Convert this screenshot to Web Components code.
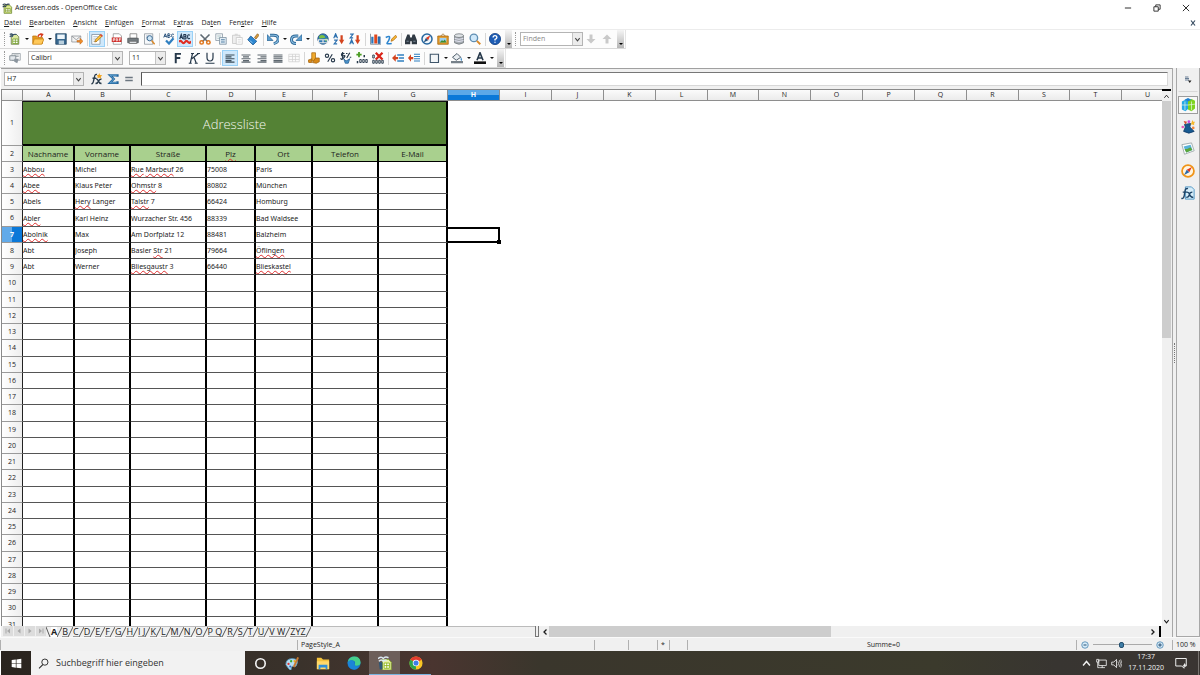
<!DOCTYPE html>
<html lang="de">
<head>
<meta charset="utf-8">
<title>Adressen.ods - OpenOffice Calc</title>
<style>
  html, body { margin: 0; height: 100%; }
  body { background: #fff; color: #1c1c1c; font: 7px/10px "Open Sans", "Noto Sans", sans-serif; overflow: hidden; }
</style>
</head>
<body>
<calc-app></calc-app>
<script>
const ICONS = {
  ods: '<path d="M3 3h8l3 3v9H3z" fill="#dbe88a" stroke="#5b7a1e"/><path d="M5 8h7v5H5zM5 10.500h7M8.500 8v5" fill="#fff" stroke="#7d9a2a"/><path d="M1 3q3-3 5 0q2-2 5-1M1 6q3-3 5 0" fill="none" stroke="#345" stroke-width="1.600"/>',
  newdoc: '<path d="M3 2h7l3 3v10H3z" fill="#dbe8a0" stroke="#5f7440"/><path d="M5 8h7v6H5zM5 11h7M8.500 8v6" fill="#fff" stroke="#6f9d23"/><path d="M1 2q3-2 4 1q2-2 5-1M1 5q2-2 4 0" fill="none" stroke="#35506d" stroke-width="1.600"/>',
  open: '<path d="M1 4h5l2 2h6v8H1z" fill="#e79a1c" stroke="#b87410"/><path d="M3 8h13l-3 7H1z" fill="#ffc95a" stroke="#c98312"/><path d="M8 5q1-4 5-3M11 1l3 1-2 3" fill="none" stroke="#d63a1c" stroke-width="2"/>',
  save: '<path d="M1 1h14v14H1z" fill="#38688f" stroke="#1e415f"/><path d="M3 2h10v6H3z" fill="#eef6fb"/><path d="M5 10h7v5H5z" fill="#b9cfdd"/>',
  mail: '<path d="M1 4h12v8H1z" fill="#f3f3f3" stroke="#8a8f94"/><path d="M1 4l6 5 6-5" fill="none" stroke="#8a8f94"/><path d="M8 10h4V7l4 4-4 4v-3H8z" fill="#f0902c" stroke="#bb5e10" stroke-width=".7"/>',
  edit: '<path d="M1 2h11v13H1z" fill="#fff" stroke="#7b8b99"/><path d="M3 5h7M3 8h7M3 11h5" stroke="#8da4b8"/><path d="M5 12l1-3 7-7 2 2-7 7z" fill="#ffc83d" stroke="#a46a12"/><path d="M12 3l1-2 3 3-2 1z" fill="#d9463a"/>',
  pdf: '<path d="M3 1h8l3 3v11H3z" fill="#fff" stroke="#8b8b8b"/><path d="M1 6h13v6H1z" fill="#cf2a27"/><path d="M3 11V7.500h2v2H3M7 7.500v3h1.500v-3zM11 11V7.500h2M11 9h2" stroke="#fff" fill="none"/>',
  print: '<path d="M4 1h9v6H4z" fill="#fff" stroke="#777"/><path d="M1 7h14v6H1z" fill="#737b80" stroke="#4b5054"/><path d="M3 11h10v3H3z" fill="#dde1e4" stroke="#666"/>',
  preview: '<path d="M2 1h11v14H2z" fill="#f7f9fb" stroke="#8a939b"/><path d="M4 4h4M4 6h3M4 8h2" stroke="#9ab"/><circle cx="9" cy="7" r="3.500" fill="#cfe6f6" stroke="#3c6a92" stroke-width="1.300"/><path d="M11.500 10l4 5" stroke="#d98a2b" stroke-width="2"/>',
  spell: '<path d="M1 6l2-5 2 5M1.700 4.500h2.600M6.500 1v5h2q2-1.300 0-2.500h-2 2q1.500-1.300 0-2.500zM14.500 2q-3-2-3 1.500t3 1.500" fill="none" stroke="#27507a" stroke-width="1.300"/><path d="M4 10l4 4 6-7" fill="none" stroke="#2f7fc0" stroke-width="3"/>',
  autospell: '<path d="M1 8l2-6 2 6M1.700 6h2.600M6.500 2v6h2q2-1.500 0-3h-2 2q1.500-1.500 0-3zM14.500 3q-3-2-3 2t3 2" fill="none" stroke="#1f3550" stroke-width="1.500"/><path d="M0 12q2-3 4 0t4 0 4 0 4-1" fill="none" stroke="#e02b20" stroke-width="3"/>',
  cut: '<path d="M2 2l9 9M14 2l-9 9" stroke="#5f6a73" stroke-width="2.200"/><circle cx="3.500" cy="12.500" r="2.300" fill="none" stroke="#e0751a" stroke-width="2"/><circle cx="12.500" cy="12.500" r="2.300" fill="none" stroke="#e0751a" stroke-width="2"/>',
  copy: '<path d="M1 1h9v9H1z" fill="#f4f6f8" stroke="#8796a3"/><path d="M3 4h5M3 7h5" stroke="#9bb"/><path d="M6 6h9v9H6z" fill="#e1ecf4" stroke="#7a8d9d"/><path d="M8 9h5M8 12h5" stroke="#5580a5" stroke-width="1.400"/>',
  paste: '<g opacity=".55"><path d="M2 3h10v11H2z" fill="#e3e3e3" stroke="#999"/><path d="M5 1h4v3H5z" fill="#bbb"/><path d="M7 6h8v9H7z" fill="#fff" stroke="#999"/><path d="M9 9h4M9 12h4" stroke="#aaa"/></g>',
  brush: '<path d="M10 6l4-5 2 2-4 5z" fill="#d89b3e" stroke="#8f621d"/><path d="M5 4l8 7-5 5-7-7z" fill="#2c86cf" stroke="#1a5792"/><path d="M4 10l3 3" stroke="#bfe0f8"/>',
  undo: '<path d="M4 3h5q6 0 6 5t-6 6" fill="none" stroke="#2c6796" stroke-width="4"/><path d="M4 3h5q6 0 6 5t-6 6" fill="none" stroke="#8fc1e4" stroke-width="1.500"/><path d="M0 2v8h8z" fill="#5c9dce" stroke="#2c6796"/>',
  redo: '<path d="M11 4H8Q2 4 2 9t6 5" fill="none" stroke="#2c6796" stroke-width="4"/><path d="M11 4H8Q2 4 2 9t6 5" fill="none" stroke="#8fc1e4" stroke-width="1.500"/><path d="M16 2v8H8z" fill="#5c9dce" stroke="#2c6796"/>',
  globe: '<circle cx="8" cy="8" r="7" fill="#2d78b5" stroke="#1d4f7b"/><path d="M3 4q4-3 7 0t-3 3-4 1zM10 8l4-1-2 5z" fill="#7bc043"/><path d="M2 9h6v4H2zM8 9h6v4H8z" fill="none" stroke="#e8e8e8" stroke-width="1.600"/>',
  az: '<path d="M1 7l2.500-6L6 7M2 5h3M1.500 9.500h4l-4 5h4" fill="none" stroke="#2a6fae" stroke-width="1.500"/><path d="M11.500 3v8" stroke="#d3441f" stroke-width="3"/><path d="M8 9h7l-3.500 6z" fill="#d3441f"/>',
  za: '<path d="M1.500 1.500h4l-4 5h4M1 15l2.500-6L6 15M2 13h3" fill="none" stroke="#2a6fae" stroke-width="1.500"/><path d="M11.500 3v8" stroke="#d3441f" stroke-width="3"/><path d="M8 9h7l-3.500 6z" fill="#d3441f"/>',
  chart: '<path d="M2 1v14h14" fill="none" stroke="#6c7a86"/><path d="M3 5h3v9H3z" fill="#2e76ba"/><path d="M7 2h4v12H7z" fill="#e0471c"/><path d="M12 5h3v9h-3z" fill="#2e76ba" stroke="#174f86" stroke-width=".6"/>',
  draw: '<path d="M1 6q6-3 5 1t-3 6 6 1" fill="none" stroke="#2e86cf" stroke-width="2"/><path d="M8 11l1-3 5-5 2 2-5 5z" fill="#f7b733" stroke="#b26b12"/>',
  binoc: '<path d="M3 2h3l1 4h2l1-4h3l3 8v5H9v-4H7v4H0v-5z" fill="#303a44"/><path d="M2 11h3M11 11h3" stroke="#8ea0b0"/>',
  compass: '<circle cx="8" cy="8" r="6.700" fill="#eef5fb" stroke="#27679f" stroke-width="2"/><path d="M12.500 3L9.500 9.500 6.500 6.500z" fill="#e03a20"/><path d="M3.500 12.500l3-6 3 3z" fill="#26527e"/>',
  gallery: '<path d="M5 4l3-3 3 3" fill="none" stroke="#9a6a22"/><path d="M1 4h14v11H1z" fill="#e59a28" stroke="#a3640d"/><path d="M3.500 6.500h9v6h-9z" fill="#9ed0f2"/><path d="M3.500 12.500l3-3 2 1 2-2 2 4z" fill="#3d8d2f"/>',
  database: '<path d="M2 3.500v9.500q6 4 12 0V3.500z" fill="#a7adb2" stroke="#6c7378"/><ellipse cx="8" cy="3.500" rx="6" ry="2.500" fill="#dfe3e6" stroke="#6c7378"/><path d="M2 7q6 3 12 0M2 10q6 3 12 0" fill="none" stroke="#eef"/>',
  zoom: '<circle cx="6.500" cy="6.500" r="5" fill="#cfe8fa" stroke="#5f8eb3" stroke-width="1.800"/><path d="M10.500 10.500l4.500 4.500" stroke="#d98a2b" stroke-width="2.600"/>',
  help: '<circle cx="8" cy="8" r="7.500" fill="#1d5cb4" stroke="#0f3b7e"/><path d="M5.500 6q0-2.500 2.500-2.500T10.500 6q0 1.500-2.500 2.500v1.500M8 11.500v1.500" fill="none" stroke="#fff" stroke-width="1.800"/>',
  down: '<path d="M6 2h4v6h4l-6 6-6-6h4z" fill="#c9c9c9"/>',
  up: '<path d="M6 14h4V8h4L8 2 2 8h4z" fill="#c9c9c9"/>',
  styles: '<path d="M4 2h11v9H4z" fill="#f6f7f8" stroke="#8c959c"/><path d="M6 4h7M6 6h7" stroke="#8c959c"/><path d="M1 5h8v6H1z" fill="#e3e8ec" stroke="#6f7a83"/><path d="M7 9h6l-2 6-4-2z" fill="#8b959e"/>',
  bold: '<path d="M5 15V2.500h7M5 8h6" fill="none" stroke="#26384a" stroke-width="2.600"/>',
  italic: '<path d="M6 2L3 15M14 2L5 9M8 7l3 8M4 2h4M12 2h4M1 15h4M9 15h4" fill="none" stroke="#26384a" stroke-width="1.600"/>',
  underline: '<path d="M4 1v6q0 5 4 5t4-5V1M2 15h12" fill="none" stroke="#26384a" stroke-width="1.600"/>',
  left: '<path d="M2 4h12M2 6.500h8M2 9h12M2 11.500h8M2 13.500h12" stroke="#3c4c59" stroke-width="1.500"/>',
  center: '<path d="M2 4h12M4 6.500h8M2 9h12M4 11.500h8M2 13.500h12" stroke="#5c666e" stroke-width="1.500"/>',
  right: '<path d="M2 4h12M6 6.500h8M2 9h12M6 11.500h8M2 13.500h12" stroke="#5c666e" stroke-width="1.500"/>',
  justify: '<path d="M2 4h12M2 6.500h12M2 9h12M2 11.500h12M2 13.500h12" stroke="#5c666e" stroke-width="1.500"/>',
  merge: '<path d="M1 3h14v10H1zM1 6h14M1 10h14M6 3v10M10 3v10" fill="#fafafa" stroke="#d2d2d2"/>',
  currency: '<path d="M5 1h5v11H5z" fill="#f0a92c" stroke="#a86a10"/><path d="M0 11l5-2v5H1zM10 8h5v5l-4 2-5-1z" fill="#d98a1a" stroke="#a3640d"/>',
  percent: '<circle cx="4" cy="5" r="2.200" fill="none" stroke="#26384a" stroke-width="1.500"/><circle cx="12" cy="11" r="2.200" fill="none" stroke="#26384a" stroke-width="1.500"/><path d="M11 3L5 13" stroke="#26384a" stroke-width="1.500"/>',
  stdnum: '<path d="M6 2q-4-1-4 1.500t3 1.500 0 3-4 0M3.500 0v9M13 1L9 8M8 2h2M13 7h2" fill="none" stroke="#26384a" stroke-width="1.600"/><path d="M5 9l3 3 5-3-2 6H7z" fill="#4c94cc" stroke="#225f93"/>',
  adddec: '<path d="M4 0v7M.5 3.500h7" stroke="#4a9c22" stroke-width="2.400"/><path d="M11 4v3M2 12v3" stroke="#26384a" stroke-width="2"/><path d="M5 10h2v4H5zM9 10h2v4H9zM13 10h2v4h-2z" fill="none" stroke="#26384a" stroke-width="1.200"/>',
  deldec: '<path d="M1 4h2v4H1zM1 11h2v4H1zM5 11h2v4H5zM9 11h2v4H9zM13 11h2v4h-2z" fill="none" stroke="#26384a" stroke-width="1.200"/><path d="M5 1l9 9M14 1l-9 9" stroke="#d92318" stroke-width="3"/>',
  outdent: '<path d="M7 4h9M9 8h7M7 12h9" stroke="#2f7fc0" stroke-width="1.700"/><path d="M8 6.500H5V3L0 8l5 5V9.500h3z" fill="#d3441f"/>',
  indent: '<path d="M8 3h8M8 6h8M8 9h8M8 12h8" stroke="#2f7fc0" stroke-width="1.500"/><path d="M7 6.500H4V3L0 8l4 5V9.500h3z" fill="#d3441f"/>',
  border: '<path d="M3 3h11v11H3z" fill="#f3f6f8" stroke="#3f556a" stroke-width="1.500"/>',
  fill: '<path d="M2 7l6-5 5 5-6 4z" fill="#e8edf1" stroke="#4d5c69" stroke-width="1.300"/><path d="M13 7q3 3 1 5-2-1-1-5" fill="#4c94cc"/><path d="M0 12h16v3H0z" fill="#77818a"/>',
  fontcolor: '<path d="M4 11L8 1l4 10M5.500 8h5" fill="none" stroke="#26384a" stroke-width="2.200"/><path d="M0 12.500h16V16H0z" fill="#111"/>',
  fx: '<path d="M8 2Q5 1 4.500 6L3 12q-1 3-2.500 2M2 7h5M7 8q2 0 3 3t4 3M14 8q-3 0-4 3t-4 3" fill="none" stroke="#2a3c4c" stroke-width="1.800"/><path d="M11 0l1 2.500 3 .5-2 2 .5 2.500L11 6 8.500 7 9 5 7.500 3l2.500-.5z" fill="#f3a51d"/>',
  sum: '<path d="M14 5V3H4l5 5-5 5h10v-2" fill="none" stroke="#24659c" stroke-width="3"/><path d="M13 3H4l5 5-5 5h9" fill="none" stroke="#6db0e0"/>',
  equal: '<path d="M3 6h10M3 10h10" stroke="#6b7680" stroke-width="2"/>',
  menu: '<path d="M2 2h7M2 5h8M2 8h8" stroke="#59708a" stroke-width="1.800"/><path d="M8 9h7l-3.500 5z" fill="#222"/>',
  cube: '<path d="M1 4l4-2 3 1.500v9L5 15l-4-2z" fill="#25a8e8"/><path d="M8 3l4-2 4 2v9l-4 3-4-2z" fill="#7ed31f"/><path d="M1 8h7M8 8l8-1M4.500 4v10M12 4v10" stroke="#e4f6e4" stroke-width=".8"/><path d="M4 2l4-2 4 2-4 2z" fill="#1f7fd0"/>',
  magic: '<path d="M4 5l7-1-1 4 5 5-6 2-6-2 2-5z" fill="#175a92" stroke="#113c68"/><circle cx="2" cy="8" r="1.500" fill="#e553b8"/><circle cx="9" cy="2" r="1.600" fill="#c84be0"/><path d="M13 0l1 2 2 0-1 2 0 2-2-1-2 0 1-2z" fill="#f6b82a"/><circle cx="14" cy="9" r="1.500" fill="#f1843b"/><path d="M3 1l4 1-2 3z" fill="#d8492f"/>',
  picture: '<path d="M1 3l11-2 3 9-11 4z" fill="#fff" stroke="#9aa7a9"/><path d="M3 5l8-2 2 6-7 3z" fill="#58b2d8"/><path d="M4 8l3 0 4-2 2 3-7 3z" fill="#5aa63a"/>',
  navigator: '<circle cx="8" cy="8" r="6.800" fill="#fff6e2" stroke="#f09418" stroke-width="2"/><path d="M12.500 3.500l-3 6-3-3z" fill="#e03a20"/><path d="M3.500 12.500l3-6 3 3z" fill="#2c6aa8"/>',
  functions: '<path d="M5 1h7l3 3v11H5z" fill="#d5ecf8" stroke="#4590c2"/><path d="M8 3Q5 2 4.500 6L3.500 12q-1 3-3 2M2 7h5M7 7q2 0 3 3t4 3M13 7q-3 0-3.500 3T6 13" fill="none" stroke="#1f4568" stroke-width="1.600"/>',
  first: '<path d="M4 3v10" stroke="#a9a9a9" stroke-width="2"/><path d="M12 3v10L6 8z" fill="#a9a9a9"/>',
  prev: '<path d="M11 3v10L5 8z" fill="#a9a9a9"/>',
  next: '<path d="M5 3v10l6-5z" fill="#a9a9a9"/>',
  last: '<path d="M12 3v10" stroke="#a9a9a9" stroke-width="2"/><path d="M4 3v10l6-5z" fill="#a9a9a9"/>',
  chup: '<path d="M3 11l5-6 5 6" fill="none" stroke="currentColor" stroke-width="2"/>',
  chdown: '<path d="M3 5l5 6 5-6" fill="none" stroke="currentColor" stroke-width="2.400"/>',
  chleft: '<path d="M11 3L6 8l5 5" fill="none" stroke="currentColor" stroke-width="2.600"/>',
  chright: '<path d="M5 3l5 5-5 5" fill="none" stroke="currentColor" stroke-width="2.600"/>',
  minus: '<circle cx="8" cy="8" r="6.500" fill="#d6ebf8" stroke="#4a84af" stroke-width="1.600"/><path d="M5 8h6" stroke="#274f72" stroke-width="2"/>',
  plus: '<circle cx="8" cy="8" r="6.500" fill="#d6ebf8" stroke="#4a84af" stroke-width="1.600"/><path d="M4.500 8h7M8 4.500v7" stroke="#274f72" stroke-width="2"/>',
  wmin: '<path d="M3 8h10" stroke="#222" stroke-width="1.500"/>',
  wmax: '<path d="M3 6h7v7H3zM6 6V3h7v7h-3" fill="none" stroke="#222" stroke-width="1.400"/>',
  wclose: '<path d="M3 3l10 10M13 3L3 13" stroke="#222" stroke-width="1.500"/>',
  dclose: '<path d="M4 3l8 10M12 3L4 13" stroke="#34495e" stroke-width="2.400"/>',
  win: '<path d="M1 3l6-1v5.500H1zM8 2l7-1v6.500H8zM1 8.500h6V14l-6-1zM8 8.500h7V15l-7-1z" fill="#fff"/>',
  search: '<circle cx="10" cy="6" r="4.500" fill="none" stroke="#222" stroke-width="1.300"/><path d="M7 9.500L1.500 15" stroke="#222" stroke-width="1.500"/>',
  cortana: '<circle cx="8" cy="8" r="5.800" fill="none" stroke="#f4f4f4" stroke-width="2"/>',
  paint: '<path d="M1 10q0-7 7-7t6 5-4 4-3 3-6-5z" fill="#b7def2" stroke="#5b9cc0"/><circle cx="4" cy="9" r="1.300" fill="#d33"/><circle cx="7" cy="6" r="1.300" fill="#3a3"/><circle cx="11" cy="6" r="1.300" fill="#e9b11c"/><circle cx="6" cy="12" r="1.200" fill="#36c"/><path d="M9 12l5-11 2 1-5 11z" fill="#c97a32"/>',
  explorer: '<path d="M1 2h5l2 2h7v11H1z" fill="#f5c33b"/><path d="M1 6h14v9H1z" fill="#ffd96a"/><path d="M3 15v-5h10v5h-2v-2H5v2z" fill="#2f8fd8"/>',
  edge: '<circle cx="8" cy="8" r="7.500" fill="#1471c4"/><path d="M.8 7Q2 .5 8.500.5T15.500 7q0 4-4.500 4-3 0-2-2 1-3-2-4T.8 7z" fill="#45cf8c"/><path d="M.8 7Q3 4 6 5t2.500 4Q8 12 14 12q-3 4.500-7 3.500Q1 14 .8 7z" fill="#1b84d8"/>',
  office: '<path d="M5 4h7l3 3v9H5z" fill="#e8f1a8" stroke="#8cae2a"/><path d="M7 8h6v6H7zM7 11h6M10 8v6" fill="#fff" stroke="#8bb514"/><path d="M1 7h4v8H2z" fill="#2f5878"/><path d="M0 3q4-3 6 0q2-3 6-1M1 6q3-3 5 0q2-2 4-1" fill="none" stroke="#dce8f2" stroke-width="1.600"/>',
  chrome: '<circle cx="8" cy="8" r="7.500" fill="#f9c624"/><path d="M8 8L1.500 4.200A7.500 7.500 0 0 1 14.500 4.200z" fill="#e33b2e"/><path d="M8 8L1.500 4.200A7.500 7.500 0 0 0 8 15.500z" fill="#2da44e"/><circle cx="8" cy="8" r="3.700" fill="#fff"/><circle cx="8" cy="8" r="2.900" fill="#3e7de8"/>',
  network: '<path d="M4 3h11v8H4zM9 11v3M6 14h7M1 2h3v4H1zM2.500 6v8h3" fill="none" stroke="#f2f2f2" stroke-width="1.200"/>',
  volume: '<path d="M1 6h3l4-4v12l-4-4H1z" fill="none" stroke="#f2f2f2" stroke-width="1.200"/><path d="M10 5q2 3 0 6M12 3q3.500 5 0 10M14 2q4 6 0 12" fill="none" stroke="#f2f2f2"/>',
  notes: '<path d="M1 2h14v10h-3v3l-3-3H1z" fill="none" stroke="#f2f2f2" stroke-width="1.300"/><path d="M10 11q2 0 3-3 2 3 1 5z" fill="#f2f2f2"/>'
};

/* Shared base: renders css() and html() into an open shadow root. */
class Part extends HTMLElement {
  connectedCallback() {
    if (this.shadowRoot) return;
    const t = document.createElement('template');
    t.innerHTML = `<style>*{box-sizing:border-box}button,input,select{font:inherit;color:inherit;margin:0;padding:0;border:0;border-radius:0;background:none;outline:0}${this.css()}</style>${this.html()}`;
    this.attachShadow({ mode: 'open' }).append(t.content.cloneNode(true));
  }
}
const define = (name, css, html) => customElements.define(name, class extends Part {
  css() { return typeof css === 'function' ? css(this) : css; }
  html() { return typeof html === 'function' ? html(this) : html; }
});

define('app-icon',
  ':host{display:block;width:var(--icon,12px);height:var(--icon,12px)}svg{display:block;width:100%;height:100%}',
  el => `<svg viewBox="0 0 16 16" aria-hidden="true">${ICONS[el.getAttribute('name')]}</svg>`);

define('tool-button',
  `:host{display:block;flex:none}
   button{display:flex;align-items:center;justify-content:center;width:16px;height:16px;border:1px solid transparent}
   :host([active]) button{background:#cfe8fb;border-color:#99d1f7}`,
  el => `<button type="button" aria-label="${el.getAttribute('label')}"><app-icon name="${el.getAttribute('icon')}"></app-icon></button>`);

define('tool-arrow',
  `:host{display:block;flex:none}button{display:grid;place-items:center;width:7px;height:16px}
   i{border:2px solid transparent;border-top-color:#111;border-bottom:0}`,
  '<button type="button" aria-label="Optionen"><i></i></button>');

define('tool-sep', ':host{display:block;flex:none;width:4px;height:13px}i{display:block;width:1px;height:100%;margin:0 auto;background:#d6d6d6}', '<i></i>');
define('tool-grip', ':host{display:block;flex:none;width:5px;height:14px}i{display:block;width:0;height:100%;margin:0 auto;border-left:1px dotted #9a9a9a}', '<i></i>');
define('tool-more',
  `:host{display:block;flex:none;align-self:stretch;margin:0 1px 0 2px}
   button{display:flex;align-items:flex-end;justify-content:center;width:7px;height:100%;padding-bottom:3px;background:linear-gradient(#f4f4f4,#b5b5b5)}
   i{border:2px solid transparent;border-top-color:#000;border-bottom:0}`,
  '<button type="button" aria-label="Weitere"><i></i></button>');

define('combo-box',
  `:host{display:block;flex:none}
   label{display:flex;position:relative;height:14px;border:1px solid #b4b4b4;background:#fff}
   select{appearance:none;flex:1;min-width:0;padding:0 12px 0 2px}
   span{position:absolute;right:0;top:0;bottom:0;width:10px;display:grid;place-items:center;background:#ececec;border-left:1px solid #c4c4c4;color:#444;pointer-events:none;--icon:7px}`,
  el => `<label><select aria-label="${el.getAttribute('label')}"><option>${el.getAttribute('value')}</option></select><span><app-icon name="chdown"></app-icon></span></label>`);

define('title-bar',
  `:host{display:flex;align-items:center;height:16px;padding:0 1px 0 2px;gap:2px;background:#fff;--icon:11px}
   h1{flex:1;margin:0;font:inherit}button{display:grid;place-items:center;width:27px;height:16px;--icon:10px}`,
  `<app-icon name="ods"></app-icon><h1>Adressen.ods - OpenOffice Calc</h1>
   <button aria-label="Minimieren"><app-icon name="wmin"></app-icon></button>
   <button aria-label="Verkleinern"><app-icon name="wmax"></app-icon></button>
   <button aria-label="Schließen"><app-icon name="wclose"></app-icon></button>`);

define('menu-bar',
  `:host{display:flex;align-items:center;height:14px;padding:0 3px 0 4px;background:#fff;border-bottom:1px solid #ececec}
   nav{display:flex;flex:1;gap:8px}a{color:inherit;text-decoration:none}button{--icon:8px}`,
  `<nav>${['<u>D</u>atei','<u>B</u>earbeiten','<u>A</u>nsicht','<u>E</u>infügen','<u>F</u>ormat','E<u>x</u>tras','Da<u>t</u>en','Fen<u>s</u>ter','<u>H</u>ilfe'].map(x => `<a href="#">${x}</a>`).join('')}</nav>
   <button aria-label="Dokument schließen"><app-icon name="dclose"></app-icon></button>`);

define('tool-bar',
  ':host{display:flex;background:#fff}div{display:flex;align-items:center;height:19px;padding-left:2px;background:#fcfcfc;border-bottom:1px solid #d8d8d8;border-right:1px solid #e4e4e4}',
  '<div role="toolbar"><slot></slot></div>');

define('formula-bar',
  `:host{display:flex;align-items:center;height:21px;padding:0 4px 0 3px;background:#f0f0f0;border-top:1px solid #a0a0a0}
   combo-box{width:80px;margin-right:5px}
   tool-button:last-of-type{margin-right:4px}
   input{flex:1;min-width:0;height:14px;padding:0 4px;background:#fff;border:1px solid #d8d8d8;border-top-color:#777;border-left-color:#555}`,
  `<combo-box value="H7" label="Namensfeld"></combo-box>
   <tool-button icon="fx" label="Funktions-Assistent"></tool-button><tool-button icon="sum" label="Summe"></tool-button><tool-button icon="equal" label="Funktion"></tool-button>
   <input aria-label="Eingabezeile">`);

/* The spreadsheet. A leading ~ marks a word the spell checker underlines. */
const ROWS = [
  ['~Abbou','Michel','~Rue ~Marbeuf 26','75008','Paris'],
  ['~Abee','Klaus Peter','~Ohmstr 8','80802','München'],
  ['Abels','~Hery Langer','~Talstr 7','66424','Homburg'],
  ['~Abler','Karl Heinz','Wurzacher Str. 456','88339','Bad Waldsee'],
  ['~Abolnik','Max','Am Dorfplatz 12','88481','Balzheim'],
  ['Abt','Joseph','Basler ~Str 21','79664','~Öflingen'],
  ['Abt','Werner','~Bliesgaustr 3','66440','~Blieskastel']
];
const spell = s => s.replace(/~(\S+)/g, '<s>$1</s>');
define('calc-sheet',
  `:host{display:block;overflow:hidden;min-width:0;background:#fff;border-left:1px solid #8a8a8a;border-top:1px solid #8a8a8a}
   table{table-layout:fixed;border-collapse:separate;border-spacing:0;width:1172px}
   th,td{padding:0;overflow:hidden;white-space:nowrap;line-height:10px}
   th{font-weight:400}
   thead th{height:11px;background:linear-gradient(#fbfbfb,#ebebeb);border-right:1px solid #8e8e8e;border-bottom:1px solid #8e8e8e}
   thead th.on{background:linear-gradient(#5ba8e8 0 50%,#0a78d8 50%);color:#fff;font-weight:700}
   tbody tr{height:16px}tbody tr:nth-child(4n+2){height:17px}
   tbody tr.title{height:45px}tbody tr.names{height:16px}
   tbody th{background:linear-gradient(90deg,#fff,#eee);border-right:1px solid #222;border-bottom:1px solid #9a9a9a}
   tbody th.on{background:linear-gradient(90deg,#62aae9 0 50%,#0a78d8 50%);color:#fff;font-weight:700}
   td.c{padding-top:1px;border-right:2px solid #000;border-bottom:1px solid #555;font-family:"Noto Sans",sans-serif}
   .title td.c{background:#548235;color:#f4f8f0;font:300 13px/18px "Open Sans",sans-serif;text-align:center;border-top:1px solid #111;border-bottom:2px solid #000}
   .names td.c{background:#a9d08e;font:8px/10px "Open Sans",sans-serif;text-align:center;border-bottom-color:#000}
   s{text-decoration:underline wavy 1px #e03030;text-underline-offset:1px;text-decoration-skip-ink:none}
   td.cur{position:relative;overflow:visible;border:2px solid #000;border-left:0}
   td.cur::after{content:"";position:absolute;right:-3px;bottom:-3px;width:4px;height:4px;background:#000}`,
  () => {
    const widths = [21,52,56,76,49,57,66,69,52,52,52,52,52,51,52,52,52,52,52,51,52,52];
    const letters = 'ABCDEFGHIJKLMNOPQRSTU'.split('');
    const blank = '<td colspan="14"></td>';
    let body = `<tr class="title"><th>1</th><td class="c" colspan="7">Adressliste</td>${blank}</tr>
      <tr class="names"><th>2</th>${['Nachname','Vorname','Straße','~Plz','Ort','Telefon','E-Mail'].map(n => `<td class="c">${spell(n)}</td>`).join('')}${blank}</tr>`;
    for (let r = 3; r <= 31; r++) {
      const data = ROWS[r - 3] || [];
      body += `<tr><th${r === 7 ? ' class="on"' : ''}>${r}</th>` +
        Array.from({ length: 7 }, (_, i) => `<td class="c">${spell(data[i] || '')}</td>`).join('') +
        (r === 7 ? '<td class="cur"></td><td colspan="13"></td>' : blank) + '</tr>';
    }
    return `<table><colgroup>${widths.map(w => `<col style="width:${w}px">`).join('')}</colgroup>
      <thead><tr><th></th>${letters.map(l => `<th${l === 'H' ? ' class="on"' : ''}>${l}</th>`).join('')}</tr></thead><tbody>${body}</tbody></table>`;
  });

define('v-scroll',
  `:host{display:flex;flex-direction:column;width:9px;background:#f0f0f0;border-top:2px solid #000;--icon:7px}
   b{height:10px;display:grid;place-items:center}div{flex:1;display:flex;flex-direction:column}i{flex:0 0 46%;background:#cdcdcd}`,
  '<b><app-icon name="chup"></app-icon></b><div><i></i></div><b><app-icon name="chdown"></app-icon></b>');

define('sheet-tabs',
  `:host{display:flex;height:11px;background:#f0f0f0}
   .nav{display:flex;padding-left:2px;gap:1px}.nav button{width:10px;height:10px;display:grid;place-items:center;background:#dcdcdc;--icon:8px}
   .tabs{display:flex;flex:0 0 489px;border-top:1px solid #bbb;font-size:9px}
   svg{flex:none;width:5px;height:10px}
   .tabs button{line-height:9px;border-bottom:1px solid #999;height:10px}.tabs button.on{font-weight:700;background:#fff;border-color:#fff}
   .split{width:4px;border:1px solid #777;border-top:0}
   .bar{flex:1;display:flex;align-items:center;--icon:8px;padding:0 2px}.track{flex:1;display:flex;height:100%}.track i{flex:0 0 47%;background:#cdcdcd}
   .end{width:2px;background:#000}.pad{width:11px}`,
  () => {
    const tabs = ['A','B','C','D','E','F','G','H','I J','K','L','M','N','O','P Q','R','S','T','U','V W','ZYZ'];
    const slash = d => `<svg viewBox="0 0 5 10"><path d="${d}" stroke="#555" fill="none"/></svg>`;
    return `<div class="nav">${[['first','Erste'],['prev','Vorige'],['next','Nächste'],['last','Letzte']].map(([i, l]) => `<button aria-label="${l} Tabelle"><app-icon name="${i}"></app-icon></button>`).join('')}</div>
     <div class="tabs">${slash('M0 0L4 10')}${tabs.map((t, i) => `<button${i ? '' : ' class="on"'}>${t}</button>${slash('M5 0L0 10')}`).join('')}</div>
     <div class="split"></div><div class="bar"><app-icon name="chleft"></app-icon><div class="track"><i></i></div><app-icon name="chright"></app-icon></div><div class="end"></div><div class="pad"></div>`;
  });

define('side-bar',
  `:host{display:flex;width:28px;background:#f0f0f0;border-left:1px solid #a8a8a8}
   .handle{width:3px;display:grid;place-items:center}.handle i{height:20px;border-left:1px dotted #777}
   .deck{flex:1;display:flex;flex-direction:column;align-items:center;gap:4px;border:1px solid #a8a8a8;border-width:0 1px 1px}
   button{width:20px;height:18px;display:grid;place-items:center;border:1px solid transparent;--icon:14px}
   .menu{height:24px;border-bottom-color:#d8d8d8;--icon:8px}.on{border-color:#9c9c9c;background:#f8f8f8}`,
  `<div class="handle"><i></i></div><div class="deck"><button class="menu" aria-label="Seitenleiste"><app-icon name="menu"></app-icon></button>
   <button class="on" aria-label="Eigenschaften"><app-icon name="cube"></app-icon></button><button aria-label="Formatvorlagen"><app-icon name="magic"></app-icon></button>
   <button aria-label="Galerie"><app-icon name="picture"></app-icon></button><button aria-label="Navigator"><app-icon name="navigator"></app-icon></button>
   <button aria-label="Funktionen"><app-icon name="functions"></app-icon></button></div>`);

define('status-bar',
  `:host{display:grid;grid-template-columns:297fr 297fr 34px 29px 12px 18px 389fr 96px 28px;align-items:center;height:14px;padding:1px 0;background:#f0f0f0;border-top:1px solid #fafafa;--icon:8px}
   span{height:10px;border-left:1px solid #b0b0b0;padding-left:3px}span:first-child{border:0}.sum{text-align:center}
   .zoom{display:flex;align-items:center;gap:4px;padding:0 8px 0 4px}
   input{appearance:none;flex:1;min-width:0;height:8px;background:linear-gradient(#aaa,#aaa) center/100% 1px no-repeat}
   input::-webkit-slider-thumb{appearance:none;width:5px;height:6px;background:#3f7da6;border:1px solid #24506f;border-radius:2px}`,
  `<span></span><span>PageStyle_A</span><span></span><span></span><span>*</span><span></span><span class="sum">Summe=0</span>
   <span class="zoom"><app-icon name="minus"></app-icon><input type="range" aria-label="Zoom" value="48"><app-icon name="plus"></app-icon></span><span>100 %</span>`);

define('task-bar',
  `:host{display:flex;height:24px;margin-left:1px;background:linear-gradient(90deg,#2a241e,#3a322b 25%,#4a3530 36%,#3a362c 45%,#3b3a2c 78%,#383531 88%,#3a3532);color:#f2f2f2}
   button{width:31px;height:24px;display:grid;place-items:center;--icon:14px}.start{width:30px;--icon:11px}
   label{flex:0 0 214px;display:flex;align-items:center;gap:7px;padding-left:7px;background:#f2f2f2;color:#333;--icon:11px}
   input{flex:1;min-width:0;font-size:9px;line-height:12px}input::placeholder{color:#333;opacity:1}
   .on{background:#6d5f5a;border-bottom:1px solid #79b4e0}.run{border-bottom:1px solid #79b4e0}
   .small{--icon:13px}.gap{flex:1}.tray{display:flex;align-items:center;gap:4px;--icon:11px}
   time{padding:0 7px 0 6px;text-align:center;line-height:11px}.note{width:20px;--icon:12px;margin-right:7px}.peek{width:1px;margin-right:1px;background:#77736f}`,
  `<button class="start" aria-label="Start"><app-icon name="win"></app-icon></button>
   <label><app-icon name="search"></app-icon><input type="text" aria-label="Suche" placeholder="Suchbegriff hier eingeben"></label>
   <button class="small" aria-label="Cortana"><app-icon name="cortana"></app-icon></button><button aria-label="Paint"><app-icon name="paint"></app-icon></button>
   <button aria-label="Explorer"><app-icon name="explorer"></app-icon></button><button aria-label="Edge"><app-icon name="edge"></app-icon></button>
   <button class="on" aria-label="OpenOffice"><app-icon name="office"></app-icon></button><button class="run" aria-label="Chrome"><app-icon name="chrome"></app-icon></button>
   <div class="gap"></div><div class="tray"><app-icon name="chup"></app-icon><app-icon name="network"></app-icon><app-icon name="volume"></app-icon></div>
   <time>17:37<br>17.11.2020</time><button class="note" aria-label="Mitteilungen"><app-icon name="notes"></app-icon></button><div class="peek"></div>`);

const TOOLS = {
  '|': '<tool-sep></tool-sep>', 'v': '<tool-arrow></tool-arrow>', ':': '<tool-grip></tool-grip>', '>': '<tool-more></tool-more>'
};
const tools = list => list.split(' ').map(t => TOOLS[t] ||
  `<tool-button icon="${t.replace('!', '')}" label="${t.replace('!', '')}"${t.endsWith('!') ? ' active' : ''}></tool-button>`).join('');

define('calc-app',
  `:host{display:flex;flex-direction:column;height:100vh}
   .work{flex:1;display:flex;min-height:0;margin-left:1px}
   .main{flex:1;display:flex;flex-direction:column;min-width:0}
   .view{flex:1;display:flex;min-height:0;background:#f0f0f0;padding-right:1px}calc-sheet{flex:1}
   .find{width:63px;margin-left:2px;color:#888}.font{width:95px;margin:0 6px 0 5px}.size{width:37px;margin-right:4px}`,
  `<title-bar></title-bar><menu-bar></menu-bar>
   <tool-bar>${tools(': newdoc v open v save mail | edit! | pdf print preview | spell autospell! | cut copy paste brush | undo v redo v | globe az za | chart draw | binoc compass gallery database zoom | help > :')}<combo-box class="find" value="Finden" label="Suchtext"></combo-box>${tools('down up >')}</tool-bar>
   <tool-bar>${tools(': styles')}<combo-box class="font" value="Calibri" label="Schriftart"></combo-box><combo-box class="size" value="11" label="Schriftgröße"></combo-box>${tools('bold italic underline | left! center right justify merge | currency percent stdnum adddec deldec | outdent indent | border v fill v fontcolor v >')}</tool-bar>
   <div class="work"><div class="main"><formula-bar></formula-bar><div class="view"><calc-sheet></calc-sheet><v-scroll></v-scroll></div><sheet-tabs></sheet-tabs></div><side-bar></side-bar></div>
   <status-bar></status-bar><task-bar></task-bar>`);
</script>
</body>
</html>
